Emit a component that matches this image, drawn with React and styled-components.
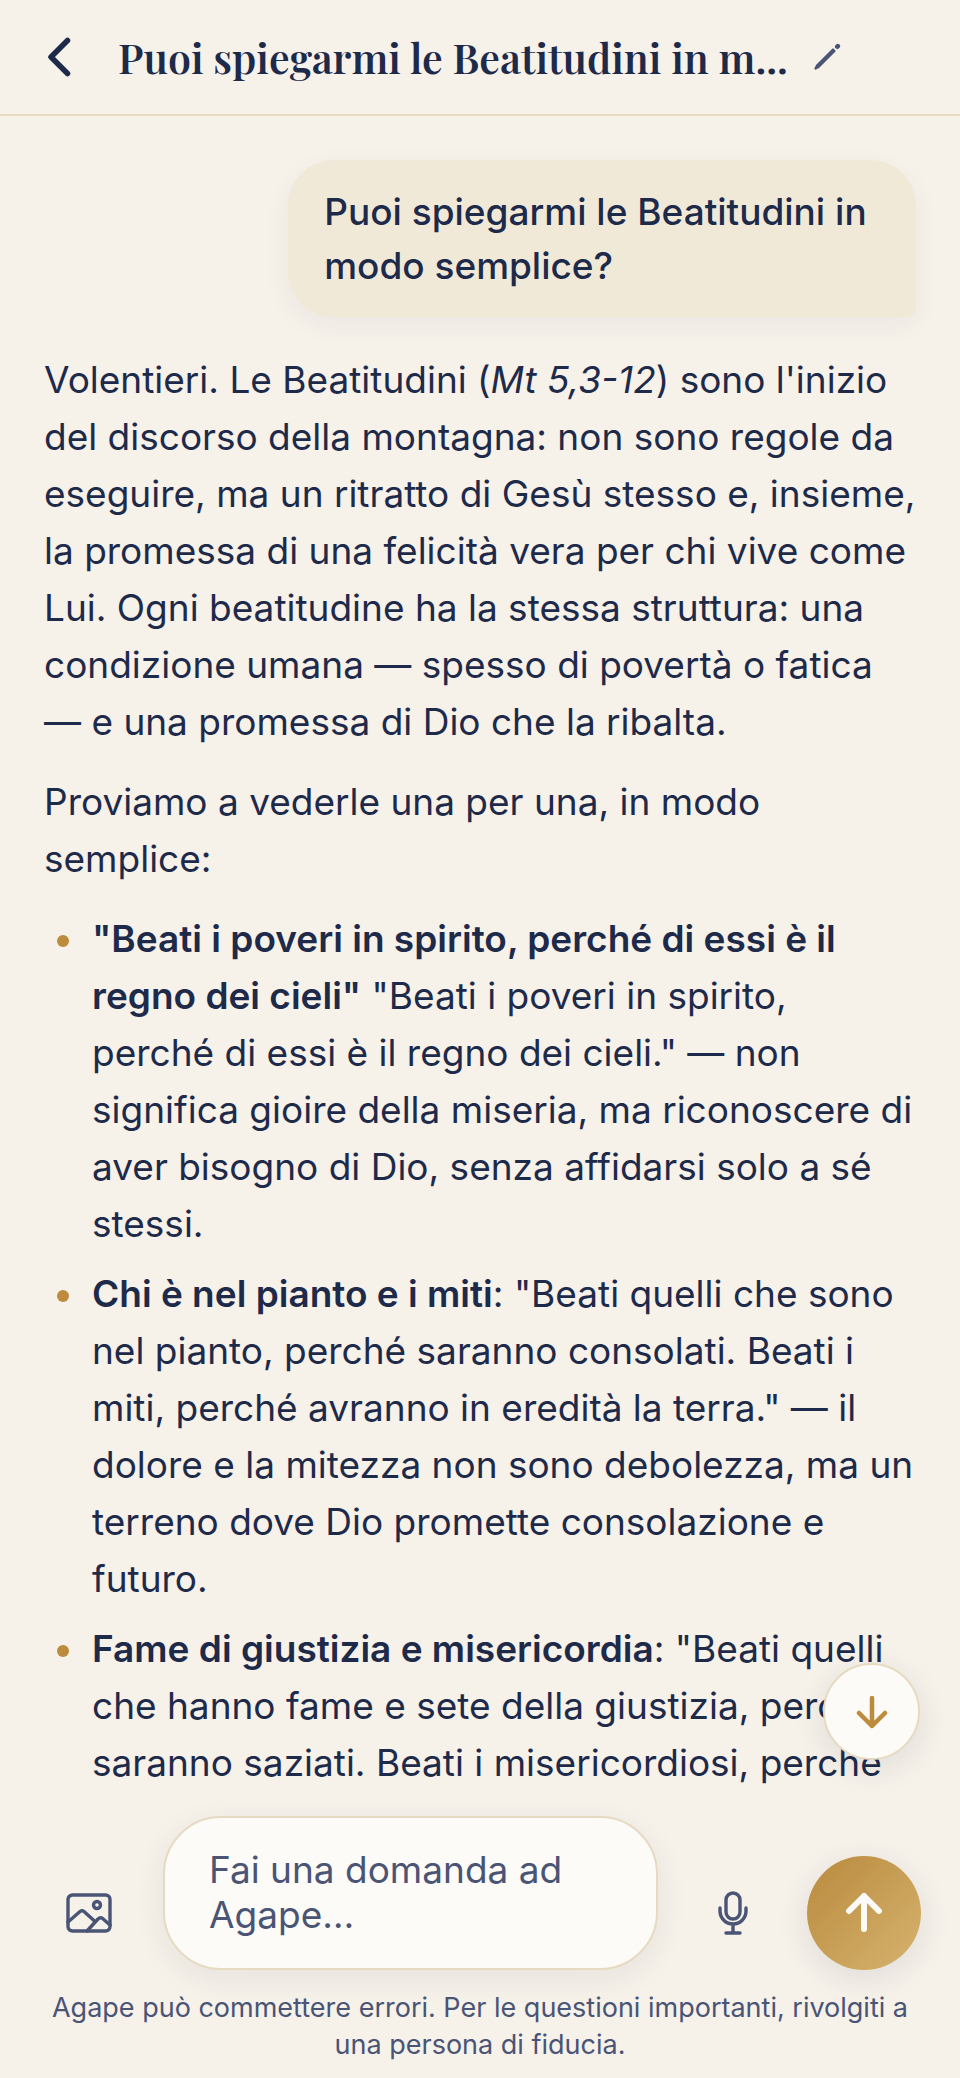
import React, { useState } from 'react';
import styled, { createGlobalStyle, css } from 'styled-components';

const GlobalStyle = createGlobalStyle`
  * {
    box-sizing: border-box;
  }
  body {
    margin: 0;
    background: #f6f1e9;
    color: #1e2a4a;
    font-family: Inter, "Liberation Sans", sans-serif;
    font-optical-sizing: none;
    font-size: 37px;
    line-height: 57px;
  }
`;

const Page = styled.div`
  display: flex;
  flex-direction: column;
  min-height: 100vh;
`;

const Header = styled.header`
  display: flex;
  align-items: center;
  height: 116px;
  padding: 0 23px;
  border-bottom: 2px solid #e6dac0;
`;

const Title = styled.h1`
  margin: 0 0 0 23px;
  font-family: "Playfair Display", "Liberation Serif", serif;
  font-size: 41px;
  font-weight: 600;
  line-height: 56px;
  white-space: nowrap;
`;

const IconButton = styled.button`
  display: flex;
  flex: none;
  align-items: center;
  justify-content: center;
  width: ${(props) => props.$width || 72}px;
  height: ${(props) => props.$height || 72}px;
  padding: 0;
  border: none;
  background: none;
  color: ${(props) => props.$color || '#4a5475'};
  cursor: pointer;
`;

const Messages = styled.main`
  flex: 1;
  padding: 44px 44px 0;
`;

const UserBubble = styled.div`
  width: fit-content;
  max-width: 72%;
  margin-left: auto;
  padding: 25px 36px 24px;
  border-radius: 46px 46px 10px 46px;
  background: #f0e9d8;
  box-shadow: 0 8px 28px rgba(30, 42, 74, 0.05);
  font-weight: 500;
  line-height: 54px;
`;

const Answer = styled.article`
  margin-right: -4px;
  padding-top: 34px;
`;

const Paragraph = styled.p`
  margin: 0 0 23px;
`;

const List = styled.ul`
  display: flex;
  flex-direction: column;
  gap: 13px;
  margin: 0;
  padding: 0 4px 0 0;
  list-style: none;
`;

const Item = styled.li`
  display: flex;
  gap: 23px;
  padding-left: 13px;

  &::before {
    content: '';
    flex: none;
    width: 12px;
    height: 12px;
    margin-top: 25px;
    border-radius: 50%;
    background: #bd8b3c;
  }

  strong {
    font-weight: 600;
  }
`;

const Footer = styled.footer`
  position: sticky;
  bottom: 0;
  padding: 20px 39px 15px;
  background: #f6f1e9;
`;

const round = css`
  display: flex;
  flex: none;
  align-items: center;
  justify-content: center;
  padding: 0;
  border-radius: 50%;
  cursor: pointer;
`;

const ScrollButton = styled.button`
  ${round}
  position: absolute;
  right: 40px;
  bottom: calc(100% + 36px);
  width: 97px;
  height: 97px;
  border: 2px solid #e6dac0;
  background: #fdfbf7;
  color: #bd8b3c;
  box-shadow: 0 8px 32px rgba(30, 42, 74, 0.1);
`;

const SendButton = styled.button`
  ${round}
  width: 114px;
  height: 114px;
  border: none;
  background: linear-gradient(135deg, #b98a3e, #d6b36e);
  color: #fdfbf7;
  box-shadow: 0 8px 32px rgba(30, 42, 74, 0.1);
`;

const Composer = styled.form`
  display: flex;
  align-items: flex-end;
  gap: 28px;
  padding-left: 3px;
`;

const Question = styled.textarea`
  flex: 1;
  min-width: 0;
  height: 154px;
  padding: 29px 44px;
  border: 2px solid #e6dac0;
  border-radius: 58px;
  outline: none;
  background: #fdfbf7;
  color: #1e2a4a;
  box-shadow: 0 8px 32px rgba(30, 42, 74, 0.07);
  font: inherit;
  line-height: 45px;
  resize: none;
  overflow: hidden;

  &::placeholder {
    color: #4a5475;
    opacity: 1;
  }
`;

const Disclaimer = styled.p`
  margin: 19px 0 0;
  color: #4a5475;
  font-size: 27px;
  line-height: 37px;
  text-align: center;
`;

const Icon = ({ width, height, stroke, children }) => (
  <svg
    width={width}
    height={height}
    viewBox={`0 0 ${width} ${height}`}
    fill="none"
    stroke="currentColor"
    strokeWidth={stroke}
    strokeLinecap="round"
    strokeLinejoin="round"
    aria-hidden="true"
  >
    {children}
  </svg>
);

const verses = [
  {
    title: '"Beati i poveri in spirito, perché di essi è il regno dei cieli"',
    text: ' "Beati i poveri in spirito, perché di essi è il regno dei cieli." — non significa gioire della miseria, ma riconoscere di aver bisogno di Dio, senza affidarsi solo a sé stessi.',
  },
  {
    title: 'Chi è nel pianto e i miti',
    text: ': "Beati quelli che sono nel pianto, perché saranno consolati. Beati i miti, perché avranno in eredità la terra." — il dolore e la mitezza non sono debolezza, ma un terreno dove Dio promette consolazione e futuro.',
  },
  {
    title: 'Fame di giustizia e misericordia',
    text: ': "Beati quelli che hanno fame e sete della giustizia, perché saranno saziati. Beati i misericordiosi, perché',
  },
];

function App() {
  const [question, setQuestion] = useState('');

  const handleSubmit = (e) => {
    e.preventDefault();
    setQuestion('');
  };

  return (
    <Page>
      <GlobalStyle />
      <Header>
        <IconButton type="button" aria-label="Indietro" $color="#1e2a4a">
          <Icon width={24} height={40} stroke={5.5}>
            <path d="M20.5 3.500 4 20l16.500 16.500" />
          </Icon>
        </IconButton>
        <Title>Puoi spiegarmi le Beatitudini in m...</Title>
        <IconButton type="button" aria-label="Modifica titolo" $width={78}>
          <Icon width={28} height={28} stroke={3}>
            <path d="M2.500 25.500 4 22.500 20 6.500 21.500 8 5.500 24Z" fill="currentColor" strokeWidth="2.200" />
            <path d="M24.300 3.700 24.800 3.200" strokeWidth="4.600" />
          </Icon>
        </IconButton>
      </Header>

      <Messages>
        <UserBubble>Puoi spiegarmi le Beatitudini in modo semplice?</UserBubble>
        <Answer>
          <Paragraph>
            Volentieri. Le Beatitudini (<em>Mt 5,3-12</em>) sono l'inizio del discorso della
            montagna: non sono regole da eseguire, ma un ritratto di Gesù stesso e, insieme, la
            promessa di una felicità vera per chi vive come Lui. Ogni beatitudine ha la stessa
            struttura: una condizione umana — spesso di povertà o fatica — e una promessa di Dio
            che la ribalta.
          </Paragraph>
          <Paragraph>Proviamo a vederle una per una, in modo semplice:</Paragraph>
          <List>
            {verses.map((verse) => (
              <Item key={verse.title}>
                <div>
                  <strong>{verse.title}</strong>
                  {verse.text}
                </div>
              </Item>
            ))}
          </List>
        </Answer>
      </Messages>

      <Footer>
        <ScrollButton type="button" aria-label="Vai in fondo">
          <Icon width={32} height={34} stroke={4.5}>
            <path d="M16 3v28M3 18l13 13 13-13" />
          </Icon>
        </ScrollButton>
        <Composer onSubmit={handleSubmit}>
          <IconButton type="button" aria-label="Aggiungi immagine" $width={93} $height={114}>
            <Icon width={46} height={40} stroke={3.4}>
              <rect x="2" y="2" width="42" height="36" rx="4.500" />
              <circle cx="31" cy="12" r="3.500" />
              <path d="M2 29 14 18.500q2-1.500 4 0L29 28.500M21 38 32 26q2-2 4-1l8 7" />
            </Icon>
          </IconButton>
          <Question
            aria-label="Domanda"
            placeholder="Fai una domanda ad Agape…"
            value={question}
            onChange={(e) => setQuestion(e.target.value)}
          />
          <IconButton type="button" aria-label="Detta" $width={93} $height={114}>
            <Icon width={32} height={44} stroke={3.4}>
              <rect x="9" y="2" width="14" height="26" rx="7" />
              <path d="M3 17v3a13 13 0 0 0 26 0v-3M16 33v9M9 42h14" />
            </Icon>
          </IconButton>
          <SendButton type="submit" aria-label="Invia">
            <Icon width={40} height={42} stroke={6}>
              <path d="M20 37V4M5 19 20 4l15 15" />
            </Icon>
          </SendButton>
        </Composer>
        <Disclaimer>
          Agape può commettere errori. Per le questioni importanti, rivolgiti a una persona di
          fiducia.
        </Disclaimer>
      </Footer>
    </Page>
  );
}

export default App;
